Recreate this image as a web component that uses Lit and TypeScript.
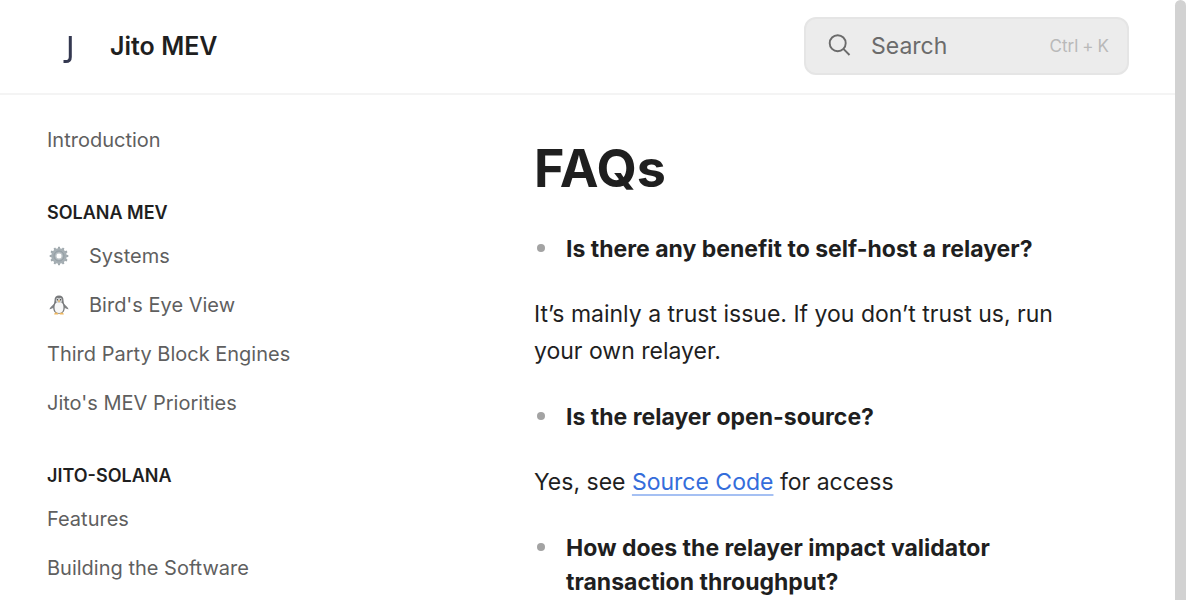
import { LitElement, html, css, svg } from "lit";
import { customElement } from "lit/decorators.js";

const gear = html`<svg class="emoji" viewBox="0 0 20 20" aria-hidden="true">
  <g fill="#a0a9ae">
    ${Array.from({ length: 12 }, (_, i) => svg`<path d="M8.700 3.500 9.100.7h1.800l.4 2.800z" transform=${`rotate(${i * 30} 10 10)`} />`)}
  </g>
  <circle cx="10" cy="10" r="5.300" fill="none" stroke="#a6afb4" stroke-width="5" />
  <circle cx="10" cy="10" r="5" fill="none" stroke="#8f999f" stroke-width=".8" />
  <circle cx="10" cy="10" r="3.200" fill="none" stroke="#c6cccf" stroke-width="1" />
</svg>`;

const penguin = html`<svg class="emoji" viewBox="0 0 20 20" aria-hidden="true">
  <path d="M5.200 8.800C3.300 10.200 1.500 12 .4 14.200c1.500.2 3.300-.8 4.800-2.200zM14.800 8.800c1.900 1.400 3.700 3.200 4.800 5.400-1.500.2-3.300-.8-4.800-2.200z" fill="#808284" />
  <path d="M10 .5C7 .5 5.500 2.600 5.500 5.200c0 1.500-.3 2.700-.8 4.100-1.100 3.600-.9 9.400 5.300 9.400s6.400-5.800 5.300-9.400c-.5-1.400-.8-2.600-.8-4.100C14.500 2.600 13 .5 10 .5z" fill="#77797b" />
  <path d="M10 6.800c-3.200 0-4.500 2.600-4.500 6 0 3.500 1.600 5.300 4.500 5.300s4.500-1.800 4.500-5.300c0-3.400-1.300-6-4.500-6z" fill="#f7f7f7" />
  <path d="M10 3.400C8.800 1.900 6.800 3 6.800 5.200c0 1.800 1.500 2.800 3.200 2.800s3.200-1 3.200-2.800c0-2.200-2-3.300-3.200-1.800z" fill="#d0d2d3" />
  <circle cx="8.400" cy="4.800" r=".7" fill="#444" /><circle cx="11.600" cy="4.800" r=".7" fill="#444" />
  <path d="M8.900 5.600h2.200L10 7.500z" fill="#e7a33b" />
  <path d="M5.200 19.400c0-1.400 1-2 2.200-2s1.800.8 1.800 2zM10.800 19.400c0-1.200.6-2 1.800-2s2.200.7 2.200 2z" fill="#efb860" />
</svg>`;

@customElement("app-root")
export class AppRoot extends LitElement {
  static styles = css`
    :host {
      display: flex;
      height: 100vh;
      overflow: hidden;
      font-family: Inter, "Liberation Sans", sans-serif;
      color: #1f1f1f;
      background: #fff;
    }
    * { box-sizing: border-box; }
    a { color: inherit; text-decoration: none; }
    .page { flex: 1; min-width: 0; }
    .scrollbar { flex: 0 0 11px; background: #d2d2d2; border-radius: 6px 6px 0 0; }
    header {
      display: flex;
      align-items: center;
      justify-content: space-between;
      padding: 17px 46px 18px 47px;
      border-bottom: 2px solid #f4f4f4;
    }
    .brand { display: flex; align-items: center; gap: 15px; font-size: 25px; line-height: 32px; font-weight: 600; }
    .logo { width: 48px; height: 48px; }
    .search {
      display: flex;
      align-items: center;
      width: 325px;
      height: 58px;
      padding: 0 18px 0 22px;
      border: 2px solid #e5e5e5;
      border-radius: 12px;
      background: #ececec;
      color: #6b6b6b;
      font: inherit;
      font-size: 23px;
      text-align: left;
    }
    .search svg { width: 24px; height: 24px; margin-right: 19px; }
    .search .label { flex: 1; }
    kbd { display: flex; gap: 4px; font: inherit; font-size: 17px; color: #b9b9b9; }
    .body { display: flex; }
    nav { flex: 0 0 487px; padding: 20px 47px; font-size: 20px; color: #5f5f5f; }
    nav a { display: flex; align-items: center; height: 49px; }
    nav ul { list-style: none; margin: 0; padding: 0; }
    nav h2 { margin: 0; padding: 37px 0 7px; font-size: 18px; line-height: 23px; font-weight: 600; color: #1f1f1f; text-transform: uppercase; }
    .emoji { width: 20px; height: 20px; margin: 0 20px 0 2px; }
    main { flex: 1; min-width: 0; padding: 40px 72px 0 47px; font-size: 23px; }
    h1 { margin: 0 0 29px; font-size: 52px; line-height: 68px; font-weight: 700; }
    main ul { list-style: none; margin: 0 0 30px; padding: 0; }
    main li { display: flex; line-height: 34px; font-weight: 700; }
    main li::before { content: ""; flex: 0 0 8px; height: 8px; margin: 12px 21px 0 3px; border-radius: 50%; background: #a3a3a3; }
    p { margin: 0 0 30px; line-height: 37px; }
    p a { color: #346ddb; text-decoration: underline 2px #a5c0f3; text-underline-offset: 4px; text-decoration-skip-ink: none; }
  `;

  render() {
    return html`
      <div class="page">
        <header>
          <a class="brand" href="#">
            <svg class="logo" viewBox="0 0 48 48" aria-hidden="true">
              <path d="M23.300 14v21q0 4.600-4.500 4.600H16.500" fill="none" stroke="#343850" stroke-width="3" />
            </svg>
            <span>Jito MEV</span>
          </a>
          <button class="search" type="button">
            <svg viewBox="0 0 24 24" fill="none" stroke="#6b6b6b" stroke-width="1.900" aria-hidden="true">
              <circle cx="9.700" cy="9.200" r="8" /><path d="m15.400 14.900 6.100 6.100" />
            </svg>
            <span class="label">Search</span><kbd><span>Ctrl</span><span>+</span><span>K</span></kbd>
          </button>
        </header>
        <div class="body">
          <nav aria-label="Table of contents">
            <ul><li><a href="#introduction">Introduction</a></li></ul>
            <h2>Solana MEV</h2>
            <ul>
              <li><a href="#systems">${gear}Systems</a></li>
              <li><a href="#birds-eye-view">${penguin}Bird's Eye View</a></li>
              <li><a href="#block-engines">Third Party Block Engines</a></li>
              <li><a href="#priorities">Jito's MEV Priorities</a></li>
            </ul>
            <h2>Jito-Solana</h2>
            <ul>
              <li><a href="#features">Features</a></li>
              <li><a href="#building">Building the Software</a></li>
            </ul>
          </nav>
          <main>
            <h1>FAQs</h1>
            <ul><li>Is there any benefit to self-host a relayer?</li></ul>
            <p>It’s mainly a trust issue. If you don’t trust us, run your own relayer.</p>
            <ul><li>Is the relayer open-source?</li></ul>
            <p>Yes, see <a href="#source-code">Source Code</a> for access</p>
            <ul><li>How does the relayer impact validator transaction throughput?</li></ul>
          </main>
        </div>
      </div>
      <div class="scrollbar"></div>
    `;
  }
}
